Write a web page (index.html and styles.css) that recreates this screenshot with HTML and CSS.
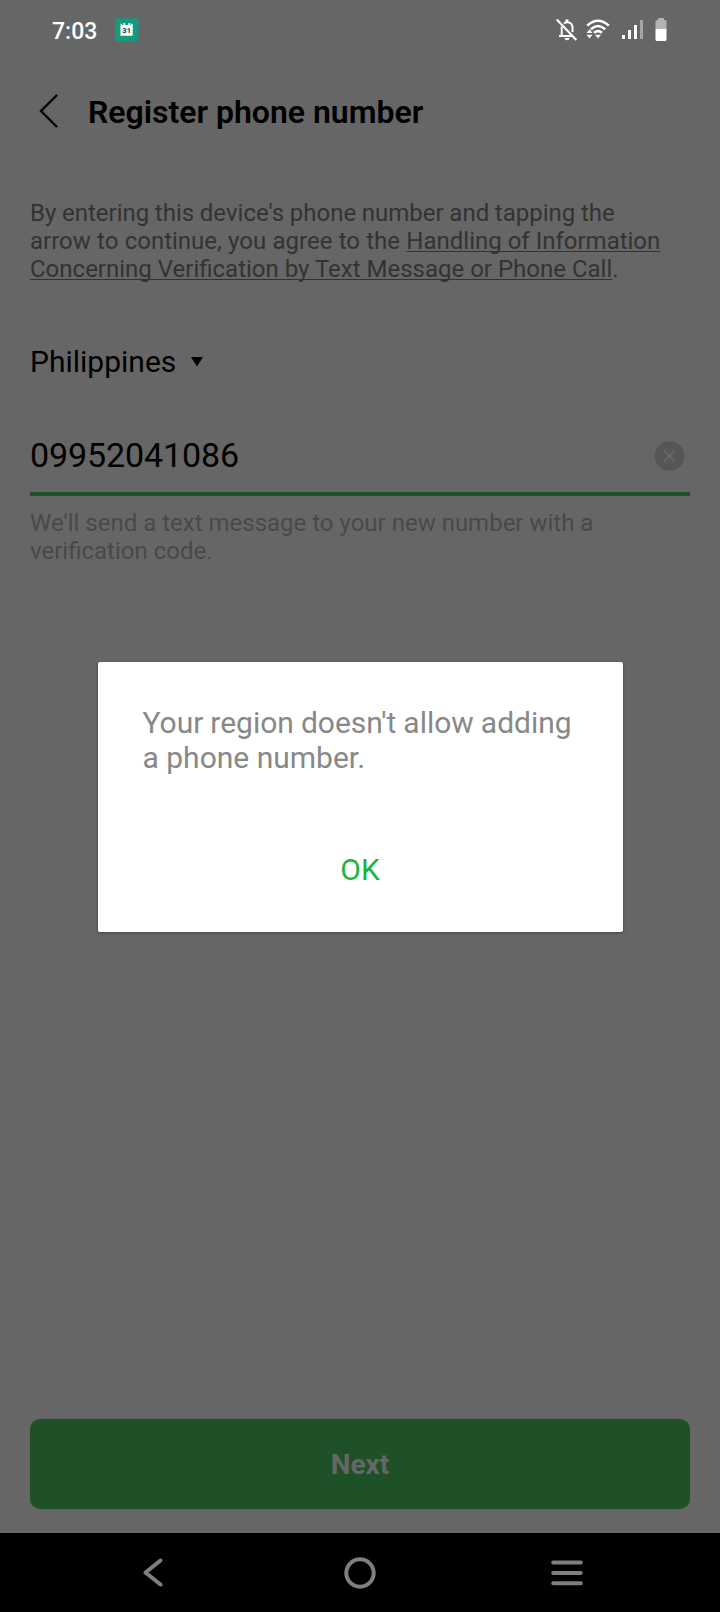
FILE: index.html
```
<!DOCTYPE html>
<html lang="en">

<head>
    <meta charset="UTF-8" />
    <meta name="viewport" content="width=device-width, initial-scale=1.0" />
    <title>Register phone number</title>
    <link rel="stylesheet" href="styles.css">
</head>

<body>
    <div class="status-bar">
        <span class="time">7:03</span>
        <svg class="calendar" width="24" height="24" viewBox="0 0 24 24">
            <rect x="0.3" y="0.3" width="23.2" height="23.2" rx="2" fill="#159a80" />
            <path d="M5.5 5.7h1.6v1.2h1.4V5h1.6v1.9h3.4V5h1.6v1.9h1V5.7h1.6v12H5.500z" fill="#fff" />
            <text class="day" x="11.700" y="15" text-anchor="middle">31</text>
        </svg>
        <div class="status-icons">
            <svg width="22" height="24" viewBox="0 0 22 24" fill="none" stroke="#fff" stroke-width="2">
                <path d="M8 5.500A5.200 5.200 0 0 1 16.500 9v5" />
                <path d="M5.700 8.500V17.500M3 18H17" />
                <path d="M11 1.500V4" stroke-width="3" />
                <path d="M8.500 20h5a2.500 2.200 0 0 1-5 0z" fill="#fff" stroke="none" />
                <path d="M0.700 1.500L20.300 22" stroke-width="2.200" />
            </svg>
            <svg class="wifi" width="24" height="24" viewBox="0 0 24 24" fill="none" stroke="#fff" stroke-width="2.500">
                <path d="M1.200 7.700Q12 -2.300 22.800 7.700" />
                <path d="M4.800 11.200Q12 4.700 19.200 11.200" />
                <path d="M8 14.800Q12 11.500 16 14.800" />
                <path d="M0.500 15L3.500 11.200L6.500 15zM0.500 16.800H6.500L3.500 20.500zM9 16.800H15L12 20.500z" fill="#fff" stroke="none" />
            </svg>
            <svg class="signal" width="23" height="24" viewBox="0 0 23 24" fill="#fff">
                <rect x="1" y="16" width="3" height="4" />
                <rect x="7" y="11" width="3" height="9" />
                <rect x="13" y="6" width="3" height="14" />
                <rect x="19" y="1" width="3" height="19" fill="#a6a6a6" />
            </svg>
            <svg class="battery" width="12" height="24" viewBox="0 0 12 24">
                <path d="M0.500 11V3.500Q0.500 2 2 2H3V1Q3 0 4 0H8Q9 0 9 1V2H10Q11.500 2 11.500 3.500V11z" fill="#b3b3b3" />
                <path d="M0.500 11H11.500V21.500Q11.500 23 10 23H2Q0.500 23 0.500 21.500z" fill="#fff" />
            </svg>
        </div>
    </div>

    <header class="header">
        <svg width="20" height="36" viewBox="0 0 20 36" fill="none" stroke="#000" stroke-width="2.400">
            <path d="M19 1L3 17L19 33" />
        </svg>
        <h1>Register phone number</h1>
    </header>

    <main class="main">
        <p class="terms"><span class="tight">By entering this device's phone number and tapping the</span><br><span class="loose">arrow to continue, you agree to the </span><a>Handling of Information</a><br><a>Concerning Verification by Text Message or Phone Call</a>.</p>

        <div class="country">
            <span>Philippines</span>
            <svg width="12" height="10" viewBox="0 0 12 10"><path d="M0 0H12L6 9.500z" /></svg>
        </div>

        <div class="phone-field">
            <span class="phone">09952041086</span>
            <svg width="30" height="30" viewBox="0 0 30 30">
                <circle cx="14.500" cy="15" r="14.800" fill="#565656" />
                <path d="M9 9.500L20 20.500M20 9.500L9 20.500" stroke="#666" stroke-width="2.400" />
            </svg>
        </div>
        <p class="hint">We'll send a text message to your new number with a<br>verification code.</p>

        <button type="button" class="next">Next</button>
    </main>

    <nav class="nav-bar">
        <svg width="20" height="30" viewBox="0 0 20 30" fill="none" stroke="#7f7f7f" stroke-width="4" stroke-linecap="round" stroke-linejoin="round">
            <path d="M17.500 2.500L2.500 14.500L17.500 26.500" />
        </svg>
        <svg class="home" width="32" height="32" viewBox="0 0 32 32" fill="none" stroke="#7f7f7f" stroke-width="4">
            <circle cx="16" cy="16" r="13.700" />
        </svg>
        <svg width="34" height="28" viewBox="0 0 34 28" stroke="#7f7f7f" stroke-width="4" stroke-linecap="round">
            <path d="M3.200 3.500H30.800M3.200 14H30.800M3.200 24.200H30.800" />
        </svg>
    </nav>

    <div class="dialog">
        <p><span class="tight">Your region doesn't allow adding</span><br>a phone number.</p>
        <button type="button">OK</button>
    </div>
</body>

</html>
```
FILE: styles.css
```
body {
    font-family: Roboto, sans-serif;
    margin: 0;
    height: 1612px;
    display: flex;
    flex-direction: column;
    background-color: #666;
    color: #000;
    position: relative;
    overflow: hidden;
}

svg {
    display: block;
    flex: none;
}

p,
h1 {
    margin: 0;
}

button {
    font-family: inherit;
    border: none;
    padding: 0;
}

.status-bar {
    display: flex;
    align-items: flex-start;
    height: 75px;
    padding: 18px 53px 0 52px;
    box-sizing: border-box;
    color: #fff;
}

.time {
    font-size: 23px;
    line-height: 28px;
    font-weight: 500;
    width: 63px;
}

.day {
    font-size: 7.5px;
    font-weight: 900;
    fill: #24584e;
}

.status-icons {
    display: flex;
    margin-left: auto;
}

.wifi {
    margin-left: 8px;
}

.signal {
    margin: 1px 0 0 11px;
}

.battery {
    margin-left: 11px;
}

.header {
    display: flex;
    align-items: center;
    height: 74px;
    padding: 0 38px;
    gap: 30px;
}

.header h1 {
    font-size: 32px;
    line-height: 40px;
    font-weight: 600;
}

.main {
    flex: 1;
    display: flex;
    flex-direction: column;
    padding: 50px 30px 24px;
}

.terms,
.hint {
    font-size: 24px;
    line-height: 28px;
    white-space: nowrap;
}

.terms {
    color: #333;
}

.terms a {
    text-decoration: underline;
    text-decoration-thickness: 1px;
    text-decoration-skip-ink: none;
    text-underline-offset: 2px;
}

.tight {
    word-spacing: -0.3px;
}

.loose {
    word-spacing: 0.33px;
}

.country {
    display: flex;
    align-items: center;
    gap: 15px;
    margin-top: 61px;
    font-size: 30px;
    line-height: 36px;
}

.phone-field {
    display: flex;
    align-items: center;
    justify-content: space-between;
    margin-top: 39px;
    height: 73px;
    padding-right: 5px;
    border-bottom: 4px solid #1e5128;
}

.phone {
    font-size: 34px;
    line-height: 40px;
    letter-spacing: -0.1px;
    padding-bottom: 2px;
}

.hint {
    margin-top: 13px;
    color: #494949;
}

.next {
    margin-top: auto;
    height: 90px;
    border-radius: 10px;
    background-color: #1e5128;
    color: #666;
    font-size: 28px;
    font-weight: 700;
}

.nav-bar {
    display: flex;
    align-items: center;
    justify-content: space-between;
    height: 79px;
    padding: 0 136px 0 143px;
    background-color: #000;
}

.nav-bar .home {
    margin-left: 7px;
}

.dialog {
    position: absolute;
    top: 661.5px;
    left: 97.5px;
    width: 525px;
    height: 270px;
    padding: 43px 45px 0;
    box-sizing: border-box;
    display: flex;
    flex-direction: column;
    border-radius: 2px;
    background-color: #fff;
    box-shadow: 0 1px 3px rgba(0, 0, 0, 0.35);
}

.dialog p {
    font-size: 30px;
    line-height: 35px;
    color: #888;
    white-space: nowrap;
}

.dialog .tight {
    word-spacing: -0.5px;
}

.dialog button {
    margin-top: 77px;
    background: none;
    color: #1cb53b;
    font-size: 30px;
    line-height: 36px;
}
```
